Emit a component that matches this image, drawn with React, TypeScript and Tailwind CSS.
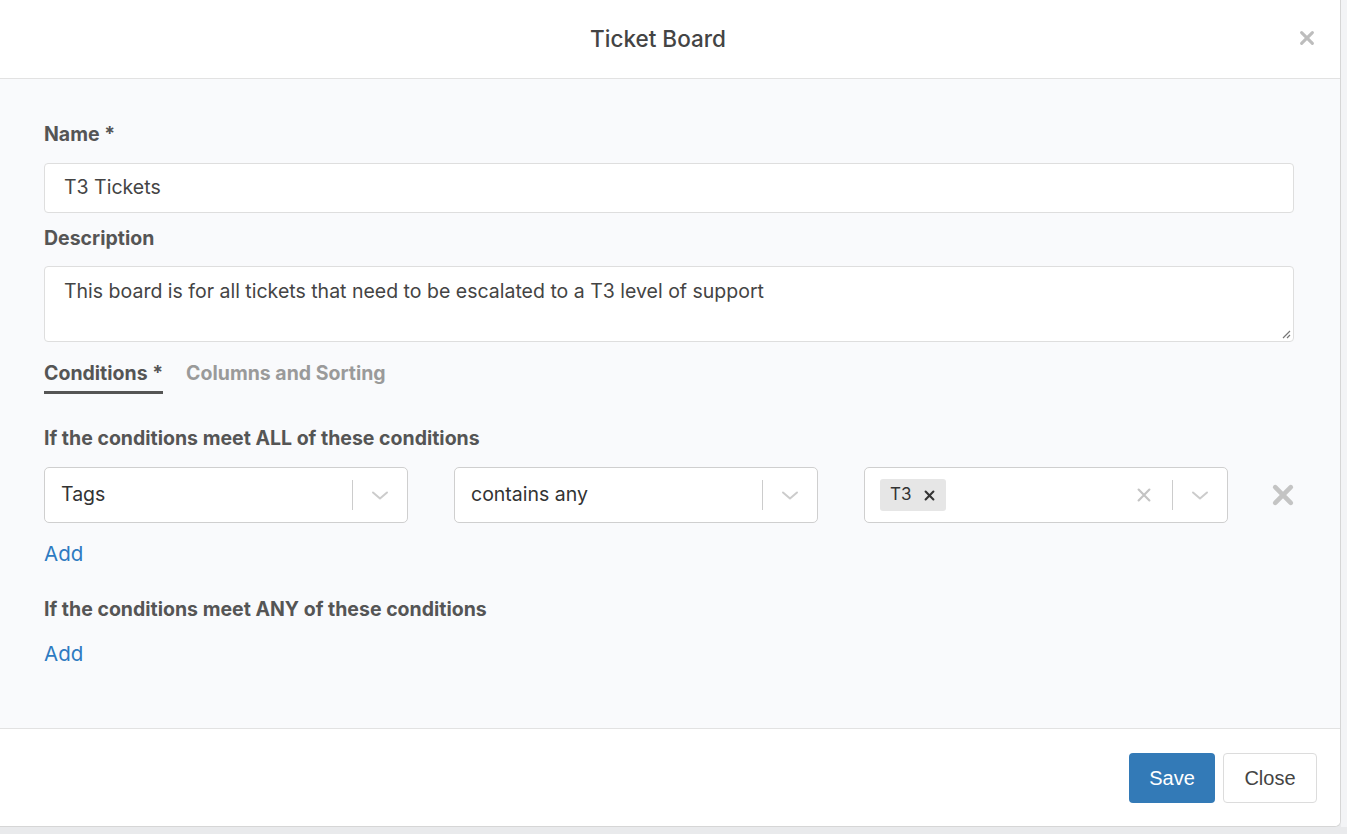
import React from "react";

function Chevron() {
  return (
    <svg width="20" height="20" viewBox="0 0 20 20" fill="none">
      <path d="M3 7.5 L10 13.5 L17 7.5" stroke="#cccccc" strokeWidth="2" strokeLinecap="round" strokeLinejoin="round" />
    </svg>
  );
}

function XMark({ size, stroke, color }: { size: number; stroke: number; color: string }) {
  return (
    <svg width={size} height={size} viewBox="0 0 20 20" fill="none">
      <path d="M4 4 L16 16 M16 4 L4 16" stroke={color} strokeWidth={stroke} strokeLinecap="round" />
    </svg>
  );
}

function Select({ value }: { value: string }) {
  return (
    <div className="flex h-[56px] w-[364px] shrink-0 items-center rounded-[5px] border border-[#cfcfcf] bg-white">
      <div className="flex-1 pl-[16px] text-[19.5px] text-[#333]">{value}</div>
      <div className="h-[30px] w-px bg-[#cccccc]" />
      <div className="flex w-[54px] items-center justify-center">
        <Chevron />
      </div>
    </div>
  );
}

export default function App() {
  const font = { fontFamily: "Inter, 'Noto Sans', sans-serif" };
  return (
    <div className="flex h-[834px] w-[1347px] flex-col bg-[#e9eaec]" style={font}>
      <div className="flex h-[827px] w-[1347px]">
        <div className="flex w-[1341px] flex-col overflow-hidden rounded-br-[6px] border-r border-b border-[#d6d6d6] bg-white">
          {/* Header */}
          <div className="relative flex h-[79px] shrink-0 items-center justify-center border-b border-[#e2e2e2] bg-white">
            <div className="pr-[24px] text-[22.5px] font-medium text-[#444]">Ticket Board</div>
            <div className="absolute right-[24px] top-[29px]">
              <XMark size={18} stroke={3.4} color="#bdbdbd" />
            </div>
          </div>
          {/* Body */}
          <div className="flex flex-1 flex-col bg-[#f9fafc] px-[44px] pt-[43px]">
            <div className="pr-[2px]">
              <div className="text-[19.5px] font-bold leading-[24px] text-[#555]">Name *</div>
              <div className="mt-[17px] flex h-[50px] items-center rounded-[4px] border border-[#dedede] bg-white pl-[19px] text-[19.5px] text-[#444]">
                T3 Tickets
              </div>
              <div className="mt-[13px] text-[19.5px] font-bold leading-[24px] text-[#555]">Description</div>
              <div className="relative mt-[16px] h-[76px] rounded-[4px] border border-[#dedede] bg-white pl-[19px] pt-[12px] text-[19.5px] leading-[24px] text-[#444]">
                This board is for all tickets that need to be escalated to a T3 level of support
                <svg className="absolute bottom-[2px] right-[2px]" width="10" height="10" viewBox="0 0 10 10">
                  <path d="M9 2 L2 9 M9 6 L6 9" stroke="#777" strokeWidth="1.2" />
                </svg>
              </div>
            </div>
            {/* Tabs */}
            <div className="mt-[19px] flex gap-[23px]">
              <div className="border-b-[3px] border-[#555] pb-[6px] text-[19.5px] font-bold leading-[24px] text-[#555]">Conditions *</div>
              <div className="text-[19.5px] font-bold leading-[24px] text-[#9a9a9a]">Columns and Sorting</div>
            </div>
            <div className="mt-[32px] text-[19.5px] font-bold leading-[24px] text-[#555]">If the conditions meet ALL of these conditions</div>
            <div className="mt-[17px] flex items-center gap-[46px]">
              <Select value="Tags" />
              <Select value="contains any" />
              <div className="flex h-[56px] w-[364px] shrink-0 items-center rounded-[5px] border border-[#cfcfcf] bg-white">
                <div className="flex flex-1 items-center pl-[15px]">
                  <div className="flex h-[32px] items-center gap-[12px] rounded-[3px] bg-[#e6e6e6] pl-[10px] pr-[10px] text-[17px] text-[#333]">
                    <span>T3</span>
                    <XMark size={13} stroke={3.2} color="#333" />
                  </div>
                </div>
                <div className="flex w-[56px] items-center justify-center">
                  <XMark size={18} stroke={2.4} color="#c4c4c4" />
                </div>
                <div className="h-[30px] w-px bg-[#cccccc]" />
                <div className="flex w-[54px] items-center justify-center">
                  <Chevron />
                </div>
              </div>
              <div className="ml-[-4px] shrink-0">
                <XMark size={26} stroke={3.6} color="#c4c4c4" />
              </div>
            </div>
            <div className="mt-[19px] text-[20.5px] leading-[24px] text-[#2e7bc1]">Add</div>
            <div className="mt-[31px] text-[19.5px] font-bold leading-[24px] text-[#555]">If the conditions meet ANY of these conditions</div>
            <div className="mt-[21px] text-[20.5px] leading-[24px] text-[#2e7bc1]">Add</div>
          </div>
          {/* Footer */}
          <div className="flex h-[98px] shrink-0 items-center justify-end gap-[8px] border-t border-[#e2e2e2] bg-white pr-[23px]">
            <div
              className="flex h-[50px] w-[86px] items-center justify-center rounded-[4px] bg-[#337ab7] text-[20px] text-white"
              style={{ fontFamily: "'Liberation Sans', Arial, sans-serif" }}
            >
              Save
            </div>
            <div
              className="flex h-[50px] w-[94px] items-center justify-center rounded-[4px] border border-[#dcdcdc] bg-white text-[20px] text-[#444]"
              style={{ fontFamily: "'Liberation Sans', Arial, sans-serif" }}
            >
              Close
            </div>
          </div>
        </div>
        <div className="flex-1 bg-[#f3f4f6]" />
      </div>
    </div>
  );
}
